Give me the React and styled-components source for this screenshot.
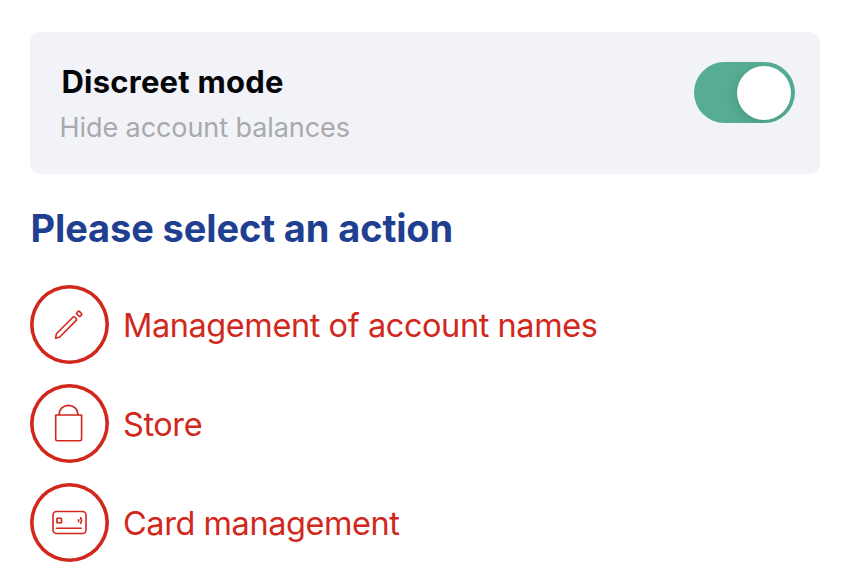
import React, { useState } from "react";
import styled, { createGlobalStyle } from "styled-components";

const GlobalStyle = createGlobalStyle`
  * { box-sizing: border-box; }
  body { margin: 0; background: #fff; font-family: Inter, "Liberation Sans", sans-serif; }
`;

const Screen = styled.main`
  width: 850px;
  height: 583px;
  padding: 32px 30px 0 29.5px;
  overflow: hidden;
  background: #fff;
`;

const SettingCard = styled.section`
  display: flex;
  justify-content: space-between;
  align-items: flex-start;
  height: 142px;
  padding: 30px 25px 0 30px;
  border-radius: 10px;
  background: #f2f3f8;
`;

const SettingText = styled.div`
  display: flex;
  flex-direction: column;
`;

const SettingTitle = styled.h2`
  margin: 0 0 0 2px;
  font-size: 31px;
  font-weight: 700;
  line-height: 40px;
  letter-spacing: 0.23px;
  white-space: nowrap;
  color: #050608;
`;

const SettingHint = styled.p`
  margin: 8px 0 0;
  font-size: 27px;
  line-height: 36px;
  letter-spacing: -0.08px;
  white-space: nowrap;
  color: #a8a9ad;
`;

const Toggle = styled.button`
  display: flex;
  align-items: center;
  justify-content: ${(p) => (p.$on ? "flex-end" : "flex-start")};
  width: 101px;
  height: 61px;
  padding: 0 4px;
  border: 0;
  border-radius: 31px;
  overflow: hidden;
  background: ${(p) => (p.$on ? "#56ad94" : "#d5d7dc")};
`;

const Knob = styled.span`
  width: 54px;
  height: 54px;
  border-radius: 50%;
  background: #fff;
  box-shadow: -2px 3px 8px rgba(0, 60, 40, 0.16);
`;

const Heading = styled.h1`
  margin: 29px 0 0 1px;
  font-size: 38px;
  font-weight: 700;
  line-height: 50px;
  letter-spacing: -0.12px;
  white-space: nowrap;
  color: #213f90;
`;

const ActionList = styled.nav`
  display: flex;
  flex-direction: column;
  gap: 19.8px;
  margin-top: 32px;
`;

const Action = styled.button`
  display: flex;
  align-items: center;
  gap: 14.5px;
  height: 79px;
  padding: 0;
  border: 0;
  background: none;
  font: inherit;
  color: #d1271c;
`;

const IconRing = styled.span`
  display: flex;
  flex: none;
  align-items: center;
  justify-content: center;
  width: 79px;
  height: 79px;
  box-shadow: inset 0 0 0 3.6px currentColor;
  border-radius: 50%;
`;

const Glyph = styled.svg`
  flex: none;
  width: 40px;
  height: 40px;
  fill: none;
  stroke: currentColor;
  stroke-width: 1.6;
  stroke-linejoin: round;
  stroke-linecap: round;
`;

const ActionLabel = styled.span`
  padding-top: 3px;
  font-size: 32.5px;
  line-height: 44px;
  white-space: nowrap;
  letter-spacing: -0.43px;
`;

const Pencil = () => (
  <Glyph viewBox="0 0 40 40">
    <path d="M6.6 33.2 L7.4 28.8 L23.9 12.2 Q24.9 11.3 25.8 12.2 L27.3 13.7 Q28 14.6 27.2 15.4 L10.8 32 Z" />
    <path d="M27.8 7.8 L29.2 6.3 Q29.8 5.8 30.4 6.4 L32.5 8.7 Q33 9.3 32.5 9.9 L31.2 11.3 Q30.6 11.8 30 11.2 L27.8 8.9 Q27.3 8.3 27.8 7.8 Z" />
  </Glyph>
);

const Bag = () => (
  <Glyph viewBox="0 0 40 40">
    <path d="M6.7 12 H32.6 V36 Q32.6 37.7 30.9 37.7 H8.4 Q6.7 37.7 6.7 36 Z" />
    <path d="M10.1 11.6 C10.4 -.7 28.6 -.7 28.9 11.6" />
  </Glyph>
);

const BankCard = () => (
  <Glyph viewBox="0 0 40 40">
    <rect x="4" y="9.5" width="33" height="22" rx="3.5" />
    <rect x="7.9" y="16.2" width="4.6" height="4.6" rx=".4" />
    <path d="M7.6 26.2 H32.2" />
    <path d="M29.6 17.7 V19.7 M31.6 15.8 Q33.3 18.5 31.6 21.3" />
  </Glyph>
);

const actions = [
  { label: "Management of account names", Icon: Pencil },
  { label: "Store", Icon: Bag },
  { label: "Card management", Icon: BankCard },
];

export default function App() {
  const [discreet, setDiscreet] = useState(true);
  return (
    <Screen>
      <GlobalStyle />
      <SettingCard>
        <SettingText>
          <SettingTitle>Discreet mode</SettingTitle>
          <SettingHint>Hide account balances</SettingHint>
        </SettingText>
        <Toggle
          $on={discreet}
          role="switch"
          aria-checked={discreet}
          aria-label="Discreet mode"
          onClick={() => setDiscreet(!discreet)}
        >
          <Knob />
        </Toggle>
      </SettingCard>
      <Heading>Please select an action</Heading>
      <ActionList>
        {actions.map(({ label, Icon }) => (
          <Action key={label}>
            <IconRing>
              <Icon />
            </IconRing>
            <ActionLabel>{label}</ActionLabel>
          </Action>
        ))}
      </ActionList>
    </Screen>
  );
}
